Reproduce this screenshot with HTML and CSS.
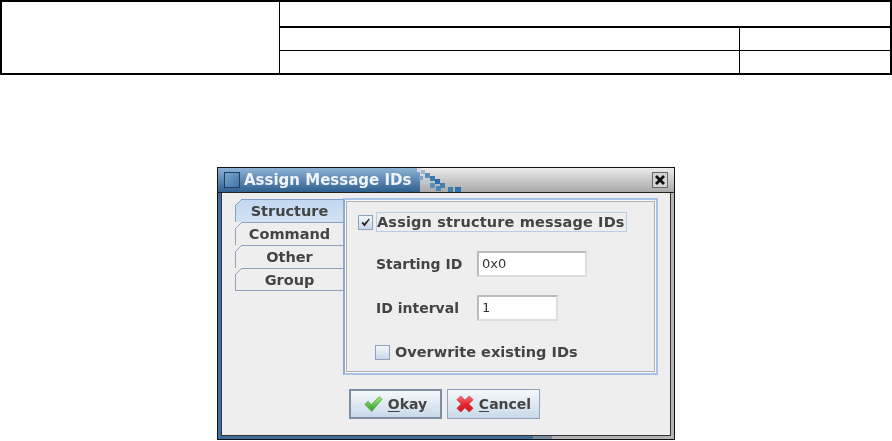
FILE: index.html
```html
<!DOCTYPE html>
<html>
  <head>
    <title>Assign Message IDs</title>
    <link rel="stylesheet" href="styles.css">
  </head>

  <body>
    <div class="spec-table">
      <div class="spec-side"></div>
      <div class="spec-main">
        <div class="spec-head"></div>
        <div class="spec-row">
          <div class="spec-name"></div>
          <div class="spec-value"></div>
        </div>
        <div class="spec-row spec-row-last">
          <div class="spec-name"></div>
          <div class="spec-value"></div>
        </div>
      </div>
    </div>

    <div class="stage">
      <div class="dialog">
        <div class="titlebar">
          <span class="title-icon"></span>
          <span class="title-text">Assign Message IDs</span>
          <svg class="title-dots" width="46" height="24" viewBox="0 0 46 24">
            <rect x="0" y="0" width="4" height="4" fill="#d5dbe2"/>
            <rect x="4" y="2" width="4" height="4" fill="#9fb6cc"/>
            <rect x="8" y="5" width="5" height="5" fill="#5d8ab3"/>
            <rect x="2" y="8" width="4" height="4" fill="#7fa3c4"/>
            <rect x="13" y="8" width="5" height="5" fill="#3e78ad"/>
            <rect x="8" y="12" width="4" height="4" fill="#b9c8d6"/>
            <rect x="18" y="11" width="5" height="5" fill="#2f6ea8"/>
            <rect x="13" y="15" width="5" height="5" fill="#5c8fbd"/>
            <rect x="23" y="15" width="5" height="5" fill="#3f7db3"/>
            <rect x="19" y="18" width="5" height="5" fill="#4f86b8"/>
            <rect x="31" y="19" width="5" height="5" fill="#3f7db3"/>
            <rect x="38" y="19" width="6" height="5" fill="#2f72ad"/>
          </svg>
          <span class="title-close">
            <svg width="12" height="12" viewBox="0 0 12 12">
              <path d="M2 2 L10 10 M10 2 L2 10" stroke="#111" stroke-width="2.8" fill="none"/>
            </svg>
          </span>
        </div>

        <div class="dialog-body">
          <div class="tab-area">
            <div class="tabs">
              <div class="tab tab-active">Structure</div>
              <div class="tab">Command</div>
              <div class="tab">Other</div>
              <div class="tab">Group</div>
            </div>

            <div class="tab-panel">
              <div class="check-row">
                <span class="checkbox">
                  <svg width="11" height="11" viewBox="0 0 11 11">
                    <path d="M1.5 6 L3 4.8 L4.3 6.5 L9 1.5 L9.8 2.2 L4.6 9.5 Z" fill="#222"/>
                  </svg>
                </span>
                <span class="check-label check-focus">Assign structure message IDs</span>
              </div>

              <div class="field-row field-start">
                <span class="field-label">Starting ID</span>
                <span class="text-input input-wide">0x0</span>
              </div>

              <div class="field-row field-interval">
                <span class="field-label">ID interval</span>
                <span class="text-input input-narrow">1</span>
              </div>

              <div class="check-row check-row-over">
                <span class="checkbox"></span>
                <span class="check-label">Overwrite existing IDs</span>
              </div>
            </div>
          </div>

          <div class="buttons">
            <div class="button button-default">
              <svg width="19" height="16" viewBox="0 0 20 17">
                <defs>
                  <linearGradient id="okGreen" x1="0" y1="0" x2="0" y2="1">
                    <stop offset="0" stop-color="#a4e87a"/>
                    <stop offset="1" stop-color="#2f9e2a"/>
                  </linearGradient>
                </defs>
                <path d="M0.8 9 L4.2 5.8 L7.8 9 L16 0.8 L19.2 3.4 L8.2 16.2 Z" fill="url(#okGreen)" stroke="#3c9a2a" stroke-width="0.7" stroke-linejoin="round"/>
              </svg>
              <span class="button-label"><u>O</u>kay</span>
            </div>
            <div class="button">
              <svg width="18" height="18" viewBox="0 0 19 19">
                <defs>
                  <linearGradient id="cancelRed" x1="0" y1="0" x2="0" y2="1">
                    <stop offset="0" stop-color="#f8777a"/>
                    <stop offset="0.5" stop-color="#e8262c"/>
                    <stop offset="1" stop-color="#c81e24"/>
                  </linearGradient>
                </defs>
                <path d="M1 5 L5 1 L9.5 5.5 L14 1 L18 5 L13.5 9.5 L18 14 L14 18 L9.5 13.5 L5 18 L1 14 L5.5 9.5 Z" fill="url(#cancelRed)" stroke="#c9252b" stroke-width="0.7" stroke-linejoin="round"/>
              </svg>
              <span class="button-label"><u>C</u>ancel</span>
            </div>
          </div>
        </div>
        <div class="dialog-foot"></div>
      </div>
    </div>
  </body>
</html>
```

FILE: styles.css
```css
html,
body {
  margin: 0;
  padding: 0;
  height: 441px;
  overflow: hidden;
  background-color: #fff;
}

body {
  font-family: "DejaVu Sans", sans-serif;
  color: #333;
}

.spec-table {
  display: flex;
  height: 75px;
  box-sizing: border-box;
  border: 2px solid #000;
}

.spec-side {
  width: 277px;
  border-right: 1px solid #000;
}

.spec-main {
  flex: 1;
  display: flex;
  flex-direction: column;
}

.spec-head {
  height: 24px;
  border-bottom: 2px solid #000;
}

.spec-row {
  display: flex;
  height: 22px;
  border-bottom: 1px solid #000;
}

.spec-row-last {
  border-bottom: none;
}

.spec-name {
  width: 459px;
  border-right: 1px solid #000;
}

.spec-value {
  flex: 1;
}

.stage {
  display: flex;
  padding: 92px 0 0 217px;
}

.dialog {
  width: 458px;
  height: 273px;
  box-sizing: border-box;
  border: 1px solid #111;
  background-color: #eee;
  display: flex;
  flex-direction: column;
  filter: blur(0.35px);
}

.titlebar {
  position: relative;
  height: 24px;
  display: flex;
  align-items: center;
  padding-left: 6px;
  background: linear-gradient(to bottom, #ececec, #a8a8a8);
  border-bottom: 1px solid #222;
  flex-shrink: 0;
}

.titlebar::before {
  content: "";
  position: absolute;
  left: 0;
  top: 0;
  bottom: 0;
  width: 202px;
  background: linear-gradient(to bottom, #8eb2d4, #2f5f90);
}

.title-icon {
  position: relative;
  width: 16px;
  height: 16px;
  box-sizing: border-box;
  border: 1px solid #1d3f60;
  background: linear-gradient(135deg, #7ba5ce, #3f74a8);
}

.title-text {
  position: relative;
  margin-left: 4px;
  font-size: 15px;
  font-weight: bold;
  color: #eef4fa;
}

.title-dots {
  position: absolute;
  left: 199px;
  top: 0;
}

.title-close {
  position: absolute;
  right: 6px;
  top: 4px;
  width: 16px;
  height: 16px;
  box-sizing: border-box;
  border: 1px solid #666;
  background-color: #d4d4d4;
  display: flex;
  align-items: center;
  justify-content: center;
}

.dialog-body {
  flex: 1;
  border-left: 3px solid #3f6f9f;
  border-right: 3px solid #b4b4b4;
  box-shadow: inset 1px 0 #333, inset -1px 0 #333, inset 0 -1px #333;
  padding: 5px 0 0 14px;
  display: flex;
  flex-direction: column;
}

.dialog-foot {
  height: 3px;
  flex-shrink: 0;
  background: linear-gradient(to right, #3f6f9f 0 315px, #7a8da0 315px 334px, #b4b4b4 334px);
}

.tab-area {
  display: flex;
}

.tabs {
  width: 108px;
  padding-top: 1px;
  flex-shrink: 0;
}

.tab {
  position: relative;
  height: 23px;
  line-height: 22px;
  box-sizing: border-box;
  border: 1px solid #8ea3bb;
  border-right: none;
  border-bottom: none;
  text-align: center;
  font-size: 14.5px;
  font-weight: bold;
  color: #444;
  background-color: #eee;
}

.tab::before {
  content: "";
  position: absolute;
  left: -1px;
  top: -1px;
  width: 7px;
  height: 7px;
  background: linear-gradient(135deg, #eee 0 43%, #8ea3bb 43% 57%, transparent 57%);
}

.tab:last-child {
  border-bottom: 1px solid #8ea3bb;
}

.tab-active {
  background: linear-gradient(to bottom, #c2d8f0, #d2e2f4);
  border-color: #7f9fd0;
}

.tab-panel {
  width: 315px;
  height: 177px;
  box-sizing: border-box;
  border: 2px solid #a6c2e6;
  border-left-color: #8ea8cc;
  box-shadow: inset 0 0 0 1px #fafafa, inset 0 0 0 2px #b0b0b0;
  padding: 12px 0 0 13px;
  display: flex;
  flex-direction: column;
}

.check-row {
  display: flex;
  align-items: center;
  font-size: 14.5px;
  font-weight: bold;
  color: #444;
}

.checkbox {
  width: 15px;
  height: 15px;
  box-sizing: border-box;
  border: 1px solid #8ea3bb;
  background: linear-gradient(to bottom, #f2f6fa, #c9d8e8);
  display: flex;
  align-items: center;
  justify-content: center;
  flex-shrink: 0;
}

.check-label {
  margin-left: 5px;
  white-space: nowrap;
}

.check-focus {
  margin-left: 3px;
  width: 251px;
  box-sizing: border-box;
  height: 20px;
  line-height: 18px;
  border: 1px solid #b9cde8;
  padding-left: 0;
  letter-spacing: 0.15px;
}

.check-row-over {
  margin-top: 23px;
  margin-left: 17px;
}

.field-row {
  display: flex;
  align-items: center;
  font-size: 14px;
  font-weight: bold;
  color: #444;
  margin-left: 18px;
}

.field-start {
  margin-top: 19px;
}

.field-interval {
  margin-top: 18px;
}

.field-label {
  width: 101px;
}

.text-input {
  height: 26px;
  box-sizing: border-box;
  border: 2px solid #bbb;
  border-right-color: #ddd;
  border-bottom-color: #ddd;
  background-color: #fff;
  padding-left: 3px;
  font-size: 13px;
  font-weight: normal;
  line-height: 22px;
  color: #333;
}

.input-wide {
  width: 110px;
}

.input-narrow {
  width: 81px;
}

.buttons {
  display: flex;
  gap: 5px;
  margin-top: 14px;
  margin-left: 114px;
}

.button {
  width: 93px;
  height: 30px;
  box-sizing: border-box;
  border: 1px solid #8ea3bb;
  background: linear-gradient(to bottom, #f5f8fb, #c9d9e9);
  display: flex;
  align-items: center;
  justify-content: center;
  gap: 5px;
  font-size: 14px;
  font-weight: bold;
  color: #444;
}

.button-default {
  border: 2px solid #7d8fa3;
}

.button-label u {
  text-underline-offset: 2px;
}
```
